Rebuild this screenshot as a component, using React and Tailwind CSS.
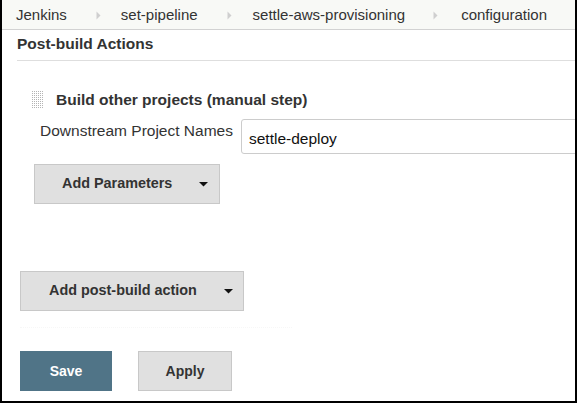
export default function App() {
  const Arrow = () => (
    <svg width="5" height="9" viewBox="0 0 5 9">
      <path d="M0.5 0.5 L4.5 4.5 L0.5 8.5 Z" fill="#cfcfcf" />
    </svg>
  );
  const Caret = () => (
    <svg width="9" height="5" viewBox="0 0 9 5">
      <path d="M0 0 L9 0 L4.5 4.5 Z" fill="#111" />
    </svg>
  );
  const dots = [];
  for (let r = 0; r < 9; r++) {
    for (let c = 0; c < 6; c++) {
      dots.push(<rect key={r + '-' + c} x={c * 2} y={r * 2} width="1" height="1" fill="#b4b4b4" />);
    }
  }
  return (
    <div
      className="w-[577px] h-[403px] bg-white border-l-2 border-r-2 border-b-2 border-black box-border overflow-hidden flex flex-col"
      style={{ fontFamily: '"Liberation Sans", Arial, sans-serif' }}
    >
      <div className="h-[30px] bg-[#f8f9f6] border-b border-[#d2d2d2] flex items-center text-[15px] text-[#333] pl-[14px] pt-[2px] shrink-0 whitespace-nowrap">
        <span>Jenkins</span>
        <span className="ml-[29px] mr-[20px] flex items-center"><Arrow /></span>
        <span>set-pipeline</span>
        <span className="ml-[29px] mr-[21px] flex items-center"><Arrow /></span>
        <span>settle-aws-provisioning</span>
        <span className="ml-[28px] mr-[23px] flex items-center"><Arrow /></span>
        <span>configuration</span>
      </div>
      <div className="pl-[15px] shrink-0">
        <div className="border-b border-[#dedede] h-[31px] flex items-center pb-[2px]">
          <span className="text-[15.5px] font-bold text-[#333]">Post-build Actions</span>
        </div>
      </div>
      <div className="pl-[30px] mt-[30px] flex items-center h-[18px] shrink-0">
        <svg width="11" height="18" viewBox="0 0 11 18">{dots}</svg>
        <span className="ml-[13px] text-[15.5px] font-bold text-[#333] whitespace-nowrap">Build other projects (manual step)</span>
      </div>
      <div className="flex items-start mt-[10px] pl-[38px] shrink-0">
        <span className="text-[15.5px] text-[#333] mt-[3px] whitespace-nowrap leading-[18px]">Downstream Project Names</span>
        <div className="ml-[8px] h-[35px] w-[400px] shrink-0 border border-[#cccccc] rounded-[3px] flex items-center pl-[7px] pt-[4px] text-[15.5px] text-[#111]">
          settle-deploy
        </div>
      </div>
      <div className="pl-[32px] mt-[10px] shrink-0">
        <button className="w-[186px] h-[40px] bg-[#e0e0e0] border border-[#c8c8c8] flex items-center pl-[27px] text-[14.4px] font-bold text-[#333] whitespace-nowrap">
          <span>Add Parameters</span>
          <span className="ml-[27px] flex items-center"><Caret /></span>
        </button>
      </div>
      <div className="pl-[18px] mt-[67px] shrink-0">
        <button className="w-[224px] h-[40px] bg-[#e0e0e0] border border-[#c8c8c8] flex items-center pl-[28px] text-[14.4px] font-bold text-[#333] whitespace-nowrap">
          <span>Add post-build action</span>
          <span className="ml-[27px] flex items-center"><Caret /></span>
        </button>
      </div>
      <div className="ml-[18px] mt-[16px] border-t border-dotted border-[#f7f7f7] w-[272px] shrink-0"></div>
      <div className="pl-[18px] mt-[23px] flex gap-[26px] shrink-0">
        <button className="w-[92px] h-[40px] bg-[#507487] text-white text-[14px] font-bold flex items-center justify-center">
          Save
        </button>
        <button className="w-[94px] h-[40px] bg-[#e0e0e0] border border-[#c8c8c8] text-[#333] text-[14px] font-bold flex items-center justify-center">
          Apply
        </button>
      </div>
    </div>
  );
}
